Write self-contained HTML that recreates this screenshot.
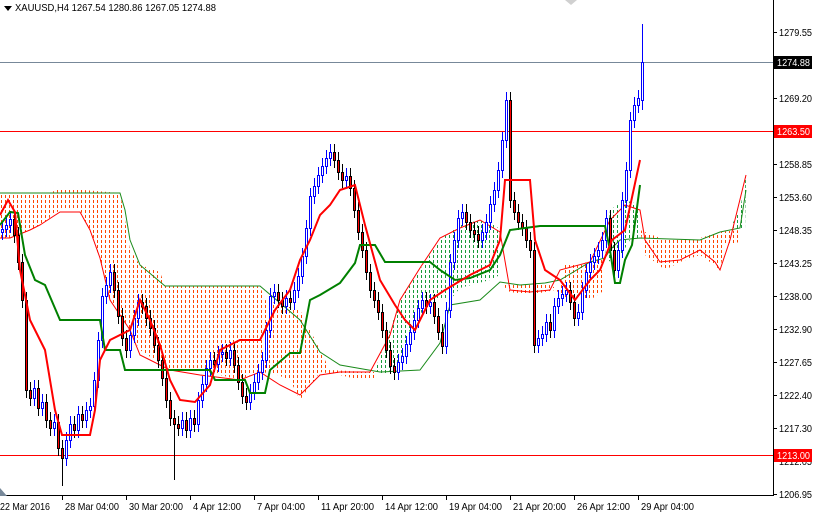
<!DOCTYPE html>
<html><head><meta charset="utf-8"><style>
html,body{margin:0;padding:0;background:#fff;}
body{width:814px;height:514px;overflow:hidden;position:relative;}
svg{position:absolute;left:0;top:0;}
text{font-family:"Liberation Sans",sans-serif;font-size:10px;fill:#000;}
</style></head><body>
<svg width="814" height="514" xmlns="http://www.w3.org/2000/svg">
<defs>
<pattern id="po" x="0" y="0" width="4" height="5" patternUnits="userSpaceOnUse"><path d="M1,0h1v3h-1z" stroke="none" fill="#ff4500" style="fill:#ff4500"/></pattern>
<pattern id="pg" x="0" y="0" width="4" height="5" patternUnits="userSpaceOnUse"><path d="M1,0h1v3h-1z" stroke="none" fill="#1a9a3a" style="fill:#1a9a3a"/></pattern>
</defs>
<polygon style="fill:url(#po)" points="0,193 50,193 60,188 120,193 125,220 130,250 140,265 160,272 165,286 260,286 265,300 300,310 310,330 320,350 330,370 370,372 375,372 375,380 360,380 340,375 320,372 300,400 290,380 270,372 250,375 240,380 200,370 170,370 140,350 130,330 110,300 100,260 90,230 80,210 60,210 40,225 30,230 10,238 0,238"/>
<polygon style="fill:url(#pg)" points="375,370 390,330 400,300 420,270 440,240 460,225 480,220 495,225 500,230 500,275 490,280 460,288 450,300 430,300 410,330 400,360 385,375"/>
<polygon style="fill:url(#po)" points="500,283 520,285 545,283 560,290 565,265 590,262 605,258 605,290 590,300 570,300 555,290 530,295 510,292"/>
<polygon style="fill:url(#pg)" points="605,258 610,210 625,200 640,205 640,240 630,240 615,265"/>
<polygon style="fill:url(#po)" points="640,230 660,238 700,238 720,232 740,230 740,242 725,245 720,270 710,262 700,255 680,262 665,270 655,262 645,255"/>
<polygon style="fill:url(#pg)" points="730,228 740,210 746,175 745,230"/>
<polyline fill="none" stroke="#1a8a1a" stroke-width="1" points="0,193 120,193 125,210 130,240 140,265 165,286 260,286 300,320 320,352 340,365 380,372 420,370 440,343 450,305 480,300 500,282 520,285 545,283 560,280 590,262 605,258 610,250 620,240 640,238 700,240 720,232 740,228 746,190"/>
<polyline fill="none" stroke="#ff0000" stroke-width="1" points="0,238 10,238 30,230 40,225 60,212 80,212 90,230 100,258 110,300 130,330 140,355 170,370 200,375 240,380 260,372 280,385 300,395 320,375 340,372 370,372 390,335 400,300 420,268 440,238 460,228 480,220 500,232 510,290 530,292 550,290 560,270 590,262 610,220 625,205 640,210 645,240 660,262 680,260 700,250 715,262 720,270 730,240 746,175"/>
<polyline fill="none" stroke="#778899" stroke-width="1" points="0,62.5 773,62.5"/>
<polyline fill="none" stroke="#ff0000" stroke-width="1" points="0,131.5 773,131.5"/>
<polyline fill="none" stroke="#ff0000" stroke-width="1" points="0,455.5 773,455.5"/>

<g stroke="#0000ff" stroke-width="1" fill="#fff">
<path fill="none" d="M2.5,221V240M6.5,217V237M10.5,211V233M34.5,380V406M42.5,394V416M54.5,414V436M66.5,432V466M70.5,416V448M78.5,406V438M86.5,402V428M90.5,398V418M94.5,372V414M98.5,332V388M102.5,288V348M106.5,277V304M110.5,264V293M130.5,327V358M134.5,310V343M138.5,294V326M182.5,412V436M190.5,410V438M198.5,392V432M202.5,376V408M206.5,360V392M210.5,352V376M218.5,346V372M222.5,344V362M230.5,342V366M250.5,384V410M254.5,374V400M258.5,364V390M262.5,352V380M266.5,322V368M270.5,288V338M274.5,284V304M286.5,290V314M294.5,282V310M298.5,268V298M302.5,248V284M306.5,220V264M310.5,188V236M314.5,178V204M318.5,167V194M322.5,158V183M326.5,150V174M330.5,144V166M346.5,168V188M398.5,354V380M402.5,348V370M406.5,336V364M410.5,324V352M414.5,312V340M418.5,300V328M422.5,292V316M430.5,294V314M446.5,302V354M450.5,254V318M454.5,232V270M458.5,210V248M462.5,204V226M482.5,224V248M486.5,214V240M490.5,196V230M494.5,182V212M498.5,162V198M502.5,132V178M506.5,92V148M538.5,330V353M542.5,326V346M546.5,314V342M554.5,298V338M558.5,290V314M562.5,286V306M566.5,282V302M578.5,304V326M582.5,282V320M586.5,264V298M590.5,254V280M594.5,248V270M598.5,242V264M602.5,232V258M606.5,210V248M618.5,242V278M622.5,192V258M626.5,162V208M630.5,112V178M634.5,97V128M638.5,90V113M642.5,24V110"/>
<rect x="1.5" y="229.5" width="2" height="3"/><rect x="5.5" y="225.5" width="2" height="4"/><rect x="9.5" y="219.5" width="2" height="6"/><rect x="33.5" y="388.5" width="2" height="10"/><rect x="41.5" y="402.5" width="2" height="6"/><rect x="53.5" y="422.5" width="2" height="6"/><rect x="65.5" y="440.5" width="2" height="18"/><rect x="69.5" y="424.5" width="2" height="16"/><rect x="77.5" y="414.5" width="2" height="16"/><rect x="85.5" y="410.5" width="2" height="10"/><rect x="89.5" y="406.5" width="2" height="4"/><rect x="93.5" y="380.5" width="2" height="26"/><rect x="97.5" y="340.5" width="2" height="40"/><rect x="101.5" y="296.5" width="2" height="44"/><rect x="105.5" y="285.5" width="2" height="11"/><rect x="109.5" y="272.5" width="2" height="13"/><rect x="129.5" y="335.5" width="2" height="15"/><rect x="133.5" y="318.5" width="2" height="17"/><rect x="137.5" y="302.5" width="2" height="16"/><rect x="181.5" y="420.5" width="2" height="8"/><rect x="189.5" y="418.5" width="2" height="12"/><rect x="197.5" y="400.5" width="2" height="24"/><rect x="201.5" y="384.5" width="2" height="16"/><rect x="205.5" y="368.5" width="2" height="16"/><rect x="209.5" y="360.5" width="2" height="8"/><rect x="217.5" y="354.5" width="2" height="10"/><rect x="221.5" y="352.5" width="2" height="2"/><rect x="229.5" y="350.5" width="2" height="8"/><rect x="249.5" y="392.5" width="2" height="10"/><rect x="253.5" y="382.5" width="2" height="10"/><rect x="257.5" y="372.5" width="2" height="10"/><rect x="261.5" y="360.5" width="2" height="12"/><rect x="265.5" y="330.5" width="2" height="30"/><rect x="269.5" y="296.5" width="2" height="34"/><rect x="273.5" y="292.5" width="2" height="4"/><rect x="285.5" y="298.5" width="2" height="8"/><rect x="293.5" y="290.5" width="2" height="12"/><rect x="297.5" y="276.5" width="2" height="14"/><rect x="301.5" y="256.5" width="2" height="20"/><rect x="305.5" y="228.5" width="2" height="28"/><rect x="309.5" y="196.5" width="2" height="32"/><rect x="313.5" y="186.5" width="2" height="10"/><rect x="317.5" y="175.5" width="2" height="11"/><rect x="321.5" y="166.5" width="2" height="9"/><rect x="325.5" y="158.5" width="2" height="8"/><rect x="329.5" y="152.5" width="2" height="6"/><rect x="345.5" y="176.5" width="2" height="4"/><rect x="397.5" y="362.5" width="2" height="10"/><rect x="401.5" y="356.5" width="2" height="6"/><rect x="405.5" y="344.5" width="2" height="12"/><rect x="409.5" y="332.5" width="2" height="12"/><rect x="413.5" y="320.5" width="2" height="12"/><rect x="417.5" y="308.5" width="2" height="12"/><rect x="421.5" y="300.5" width="2" height="8"/><rect x="429.5" y="302.5" width="2" height="4"/><rect x="445.5" y="310.5" width="2" height="36"/><rect x="449.5" y="262.5" width="2" height="48"/><rect x="453.5" y="240.5" width="2" height="22"/><rect x="457.5" y="218.5" width="2" height="22"/><rect x="461.5" y="212.5" width="2" height="6"/><rect x="481.5" y="232.5" width="2" height="8"/><rect x="485.5" y="222.5" width="2" height="10"/><rect x="489.5" y="204.5" width="2" height="18"/><rect x="493.5" y="190.5" width="2" height="14"/><rect x="497.5" y="170.5" width="2" height="20"/><rect x="501.5" y="140.5" width="2" height="30"/><rect x="505.5" y="100.5" width="2" height="40"/><rect x="537.5" y="338.5" width="2" height="7"/><rect x="541.5" y="334.5" width="2" height="4"/><rect x="545.5" y="322.5" width="2" height="12"/><rect x="553.5" y="306.5" width="2" height="24"/><rect x="557.5" y="298.5" width="2" height="8"/><rect x="561.5" y="294.5" width="2" height="4"/><rect x="565.5" y="290.5" width="2" height="4"/><rect x="577.5" y="312.5" width="2" height="6"/><rect x="581.5" y="290.5" width="2" height="22"/><rect x="585.5" y="272.5" width="2" height="18"/><rect x="589.5" y="262.5" width="2" height="10"/><rect x="593.5" y="256.5" width="2" height="6"/><rect x="597.5" y="250.5" width="2" height="6"/><rect x="601.5" y="240.5" width="2" height="10"/><rect x="605.5" y="218.5" width="2" height="22"/><rect x="617.5" y="250.5" width="2" height="20"/><rect x="621.5" y="200.5" width="2" height="50"/><rect x="625.5" y="170.5" width="2" height="30"/><rect x="629.5" y="120.5" width="2" height="50"/><rect x="633.5" y="105.5" width="2" height="15"/><rect x="637.5" y="98.5" width="2" height="7"/><rect x="641.5" y="62.5" width="2" height="38"/>
</g>
<g stroke="#000" stroke-width="1" fill="#ff0000">
<path fill="none" d="M14.5,211V243M18.5,227V270M22.5,254V308M26.5,292V398M30.5,382V406M38.5,380V416M46.5,394V428M50.5,412V436M58.5,414V456M62.5,440V486M74.5,416V438M82.5,406V428M114.5,264V298M118.5,282V324M122.5,308V346M126.5,330V358M142.5,294V314M146.5,298V326M150.5,310V336M154.5,320V353M158.5,337V368M162.5,352V386M166.5,370V408M170.5,392V426M174.5,410V480M178.5,416V436M186.5,412V438M194.5,410V432M214.5,352V372M226.5,344V366M234.5,342V373M238.5,357V390M242.5,374V404M246.5,388V410M278.5,284V308M282.5,292V314M290.5,290V310M334.5,144V168M338.5,152V180M342.5,164V188M350.5,168V196M354.5,180V218M358.5,202V240M362.5,224V258M366.5,242V280M370.5,264V298M374.5,282V308M378.5,292V320M382.5,304V338M386.5,322V358M390.5,342V374M394.5,358V380M426.5,292V314M434.5,294V324M438.5,308V340M442.5,324V354M466.5,204V230M470.5,214V238M474.5,222V242M478.5,226V248M510.5,92V208M514.5,192V220M518.5,204V230M522.5,214V236M526.5,220V248M530.5,232V258M534.5,242V353M550.5,314V338M570.5,282V310M574.5,294V326M610.5,210V258M614.5,242V278"/>
<rect x="13.5" y="219.5" width="2" height="16"/><rect x="17.5" y="235.5" width="2" height="27"/><rect x="21.5" y="262.5" width="2" height="38"/><rect x="25.5" y="300.5" width="2" height="90"/><rect x="29.5" y="390.5" width="2" height="8"/><rect x="37.5" y="388.5" width="2" height="20"/><rect x="45.5" y="402.5" width="2" height="18"/><rect x="49.5" y="420.5" width="2" height="8"/><rect x="57.5" y="422.5" width="2" height="26"/><rect x="61.5" y="448.5" width="2" height="10"/><rect x="73.5" y="424.5" width="2" height="6"/><rect x="81.5" y="414.5" width="2" height="6"/><rect x="113.5" y="272.5" width="2" height="18"/><rect x="117.5" y="290.5" width="2" height="26"/><rect x="121.5" y="316.5" width="2" height="22"/><rect x="125.5" y="338.5" width="2" height="12"/><rect x="141.5" y="302.5" width="2" height="4"/><rect x="145.5" y="306.5" width="2" height="12"/><rect x="149.5" y="318.5" width="2" height="10"/><rect x="153.5" y="328.5" width="2" height="17"/><rect x="157.5" y="345.5" width="2" height="15"/><rect x="161.5" y="360.5" width="2" height="18"/><rect x="165.5" y="378.5" width="2" height="22"/><rect x="169.5" y="400.5" width="2" height="18"/><rect x="173.5" y="418.5" width="2" height="6"/><rect x="177.5" y="424.5" width="2" height="4"/><rect x="185.5" y="420.5" width="2" height="10"/><rect x="193.5" y="418.5" width="2" height="6"/><rect x="213.5" y="360.5" width="2" height="4"/><rect x="225.5" y="352.5" width="2" height="6"/><rect x="233.5" y="350.5" width="2" height="15"/><rect x="237.5" y="365.5" width="2" height="17"/><rect x="241.5" y="382.5" width="2" height="14"/><rect x="245.5" y="396.5" width="2" height="6"/><rect x="277.5" y="292.5" width="2" height="8"/><rect x="281.5" y="300.5" width="2" height="6"/><rect x="289.5" y="298.5" width="2" height="4"/><rect x="333.5" y="152.5" width="2" height="8"/><rect x="337.5" y="160.5" width="2" height="12"/><rect x="341.5" y="172.5" width="2" height="8"/><rect x="349.5" y="176.5" width="2" height="12"/><rect x="353.5" y="188.5" width="2" height="22"/><rect x="357.5" y="210.5" width="2" height="22"/><rect x="361.5" y="232.5" width="2" height="18"/><rect x="365.5" y="250.5" width="2" height="22"/><rect x="369.5" y="272.5" width="2" height="18"/><rect x="373.5" y="290.5" width="2" height="10"/><rect x="377.5" y="300.5" width="2" height="12"/><rect x="381.5" y="312.5" width="2" height="18"/><rect x="385.5" y="330.5" width="2" height="20"/><rect x="389.5" y="350.5" width="2" height="16"/><rect x="393.5" y="366.5" width="2" height="6"/><rect x="425.5" y="300.5" width="2" height="6"/><rect x="433.5" y="302.5" width="2" height="14"/><rect x="437.5" y="316.5" width="2" height="16"/><rect x="441.5" y="332.5" width="2" height="14"/><rect x="465.5" y="212.5" width="2" height="10"/><rect x="469.5" y="222.5" width="2" height="8"/><rect x="473.5" y="230.5" width="2" height="4"/><rect x="477.5" y="234.5" width="2" height="6"/><rect x="509.5" y="100.5" width="2" height="100"/><rect x="513.5" y="200.5" width="2" height="12"/><rect x="517.5" y="212.5" width="2" height="10"/><rect x="521.5" y="222.5" width="2" height="6"/><rect x="525.5" y="228.5" width="2" height="12"/><rect x="529.5" y="240.5" width="2" height="10"/><rect x="533.5" y="250.5" width="2" height="95"/><rect x="549.5" y="322.5" width="2" height="8"/><rect x="569.5" y="290.5" width="2" height="12"/><rect x="573.5" y="302.5" width="2" height="16"/><rect x="609.5" y="218.5" width="2" height="32"/><rect x="613.5" y="250.5" width="2" height="20"/>
</g>

<polyline fill="none" stroke="#008000" stroke-width="2" points="0,225 10,212 18,213 25,255 35,280 45,285 60,320 100,320 105,350 120,350 125,370 210,370 215,380 245,380 250,393 265,393 270,370 290,353 300,353 310,300 320,295 340,283 355,263 360,245 375,245 385,262 430,262 440,270 455,280 470,278 490,270 500,255 510,230 540,226 605,226 610,250 615,283 620,283 625,260 632,245 640,185"/>
<polyline fill="none" stroke="#ff0000" stroke-width="2" points="0,215 8,200 15,212 20,270 30,320 45,350 55,410 62,435 90,435 95,410 100,360 110,340 130,330 140,300 150,320 160,345 170,380 180,400 195,402 210,385 220,350 240,340 260,340 275,310 290,290 300,260 310,240 320,215 330,205 340,190 355,185 365,225 380,280 395,305 405,320 415,330 430,300 445,290 470,275 490,265 500,240 505,180 530,180 535,240 545,270 560,280 575,300 590,280 600,270 612,240 625,230 640,160"/>

<rect x="774" y="0" width="40" height="514" style="fill:#fff"/>
<rect x="0" y="496" width="814" height="18" style="fill:#fff"/>
<rect x="773" y="0" width="1" height="496" style="fill:#000"/>
<rect x="0" y="495" width="774" height="1" style="fill:#000"/>
<polygon points="0,488 7,496 0,496" style="fill:#778899"/>
<polygon points="4,6 12,6 8,11" style="fill:#000"/>
<rect x="14" y="0" width="206" height="14" style="fill:#fff"/>
<text x="15" y="11" textLength="201" lengthAdjust="spacingAndGlyphs">XAUUSD,H4  1267.54 1280.86 1267.05 1274.88</text>
<polygon points="565,0 577,0 571,5" style="fill:#d0d0d0"/>

<g stroke="#000">
<path d="M774,32.5h3M774,98.5h3M774,164.5h3M774,197.5h3M774,230.5h3M774,263.5h3M774,296.5h3M774,329.5h3M774,362.5h3M774,395.5h3M774,428.5h3M774,461.5h3M774,494.5h3M62.5,496v4M126.5,496v4M190.5,496v4M254.5,496v4M318.5,496v4M382.5,496v4M446.5,496v4M510.5,496v4M574.5,496v4M638.5,496v4"/>
</g>
<g>
<text x="779" y="36" textLength="33" lengthAdjust="spacingAndGlyphs">1279.55</text>
<text x="779" y="102" textLength="33" lengthAdjust="spacingAndGlyphs">1269.20</text>
<text x="779" y="168" textLength="33" lengthAdjust="spacingAndGlyphs">1258.85</text>
<text x="779" y="201" textLength="33" lengthAdjust="spacingAndGlyphs">1253.60</text>
<text x="779" y="234" textLength="33" lengthAdjust="spacingAndGlyphs">1248.35</text>
<text x="779" y="267" textLength="33" lengthAdjust="spacingAndGlyphs">1243.25</text>
<text x="779" y="300" textLength="33" lengthAdjust="spacingAndGlyphs">1238.00</text>
<text x="779" y="333" textLength="33" lengthAdjust="spacingAndGlyphs">1232.90</text>
<text x="779" y="366" textLength="33" lengthAdjust="spacingAndGlyphs">1227.65</text>
<text x="779" y="399" textLength="33" lengthAdjust="spacingAndGlyphs">1222.40</text>
<text x="779" y="432" textLength="33" lengthAdjust="spacingAndGlyphs">1217.30</text>
<text x="779" y="465" textLength="33" lengthAdjust="spacingAndGlyphs">1212.05</text>
<text x="779" y="498" textLength="33" lengthAdjust="spacingAndGlyphs">1206.95</text>
</g>
<rect x="774" y="56" width="38" height="13" style="fill:#000"/>
<text x="777" y="66" style="fill:#fff" textLength="33" lengthAdjust="spacingAndGlyphs">1274.88</text>
<rect x="774" y="125" width="38" height="13" style="fill:#ff0000"/>
<text x="777" y="135" style="fill:#fff" textLength="33" lengthAdjust="spacingAndGlyphs">1263.50</text>
<rect x="774" y="449" width="38" height="13" style="fill:#ff0000"/>
<text x="777" y="459" style="fill:#fff" textLength="33" lengthAdjust="spacingAndGlyphs">1213.00</text>
<g>
<text x="0" y="510" textLength="50" lengthAdjust="spacingAndGlyphs">22 Mar 2016</text>
<text x="65" y="510" textLength="54" lengthAdjust="spacingAndGlyphs">28 Mar 04:00</text>
<text x="129" y="510" textLength="54" lengthAdjust="spacingAndGlyphs">30 Mar 20:00</text>
<text x="193" y="510" textLength="48" lengthAdjust="spacingAndGlyphs">4 Apr 12:00</text>
<text x="257" y="510" textLength="48" lengthAdjust="spacingAndGlyphs">7 Apr 04:00</text>
<text x="321" y="510" textLength="53" lengthAdjust="spacingAndGlyphs">11 Apr 20:00</text>
<text x="385" y="510" textLength="53" lengthAdjust="spacingAndGlyphs">14 Apr 12:00</text>
<text x="449" y="510" textLength="53" lengthAdjust="spacingAndGlyphs">19 Apr 04:00</text>
<text x="513" y="510" textLength="53" lengthAdjust="spacingAndGlyphs">21 Apr 20:00</text>
<text x="577" y="510" textLength="53" lengthAdjust="spacingAndGlyphs">26 Apr 12:00</text>
<text x="641" y="510" textLength="53" lengthAdjust="spacingAndGlyphs">29 Apr 04:00</text>
</g>
</svg>
</body></html>
